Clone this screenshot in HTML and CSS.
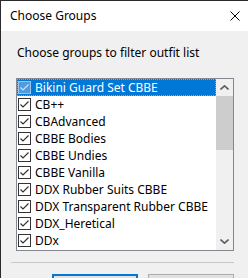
FILE: index.html
```html
<!DOCTYPE html>
<html lang="en">
<head>
    <meta charset="UTF-8">
    <meta name="viewport" content="width=device-width, initial-scale=1.0">
    <title>Choose Groups</title>
    <link rel="stylesheet" href="styles.css">
</head>
<body>
    <div class="window">
        <div class="titlebar">
            <span class="title">Choose Groups</span>
            <svg class="close" width="10" height="10" viewBox="0 0 10 10">
                <path d="M0.5 0.5 L9.5 9.5 M9.5 0.5 L0.5 9.5" stroke="#000" stroke-width="1" fill="none"/>
            </svg>
        </div>
        <div class="content">
            <div class="prompt">Choose groups to filter outfit list</div>
            <div class="listbox">
                <ul class="items">
                    <li class="item selected"><span class="box"><svg width="11" height="11" viewBox="0 0 11 11"><polyline points="1.5,5.5 4,8 9.5,2.5" /></svg></span>Bikini Guard Set CBBE</li>
                    <li class="item"><span class="box"><svg width="11" height="11" viewBox="0 0 11 11"><polyline points="1.5,5.5 4,8 9.5,2.5" /></svg></span>CB++</li>
                    <li class="item"><span class="box"><svg width="11" height="11" viewBox="0 0 11 11"><polyline points="1.5,5.5 4,8 9.5,2.5" /></svg></span>CBAdvanced</li>
                    <li class="item"><span class="box"><svg width="11" height="11" viewBox="0 0 11 11"><polyline points="1.5,5.5 4,8 9.5,2.5" /></svg></span>CBBE Bodies</li>
                    <li class="item"><span class="box"><svg width="11" height="11" viewBox="0 0 11 11"><polyline points="1.5,5.5 4,8 9.5,2.5" /></svg></span>CBBE Undies</li>
                    <li class="item"><span class="box"><svg width="11" height="11" viewBox="0 0 11 11"><polyline points="1.5,5.5 4,8 9.5,2.5" /></svg></span>CBBE Vanilla</li>
                    <li class="item"><span class="box"><svg width="11" height="11" viewBox="0 0 11 11"><polyline points="1.5,5.5 4,8 9.5,2.5" /></svg></span>DDX Rubber Suits CBBE</li>
                    <li class="item"><span class="box"><svg width="11" height="11" viewBox="0 0 11 11"><polyline points="1.5,5.5 4,8 9.5,2.5" /></svg></span>DDX Transparent Rubber CBBE</li>
                    <li class="item"><span class="box"><svg width="11" height="11" viewBox="0 0 11 11"><polyline points="1.5,5.5 4,8 9.5,2.5" /></svg></span>DDX_Heretical</li>
                    <li class="item"><span class="box"><svg width="11" height="11" viewBox="0 0 11 11"><polyline points="1.5,5.5 4,8 9.5,2.5" /></svg></span>DDx</li>
                </ul>
                <div class="scrollbar">
                    <div class="arrow">
                        <svg width="9" height="5" viewBox="0 0 9 5"><polyline points="0.5,4.5 4.5,0.8 8.5,4.5" /></svg>
                    </div>
                    <div class="track">
                        <div class="thumb"></div>
                    </div>
                    <div class="arrow">
                        <svg width="9" height="5" viewBox="0 0 9 5"><polyline points="0.5,0.5 4.5,4.2 8.5,0.5" /></svg>
                    </div>
                </div>
            </div>
            <div class="separator"></div>
            <div class="buttons">
                <button class="btn default" aria-label="OK"></button>
                <button class="btn" aria-label="Cancel"></button>
            </div>
        </div>
    </div>
</body>
</html>
```

FILE: styles.css
```css
body {
    margin: 0;
    font-family: "Noto Sans", sans-serif;
    font-size: 12px;
    color: #000;
    background: #f0f0f0;
    overflow: hidden;
}
.window {
    height: 277px;
    border-top: 1px solid #2b2b2b;
    border-left: 1px solid #2b2b2b;
    background: #f0f0f0;
    overflow: hidden;
}
.titlebar {
    height: 30px;
    background: #fff;
    display: flex;
    align-items: center;
    justify-content: space-between;
    padding: 0 8px 0 9px;
}
.title {
    line-height: 16px;
    margin-top: -1px;
}
.close {
    display: block;
    margin-top: -1px;
}
.content {
    padding: 0 14px 0 10px;
}
.prompt {
    line-height: 16px;
    padding: 14px 0 0 6px;
}
.listbox {
    margin: 17px 0 0 5px;
    width: 216px;
    height: 171px;
    border: 1px solid #828790;
    background: #fff;
    display: flex;
}
.items {
    list-style: none;
    margin: 0;
    padding: 0;
    flex: 1;
}
.item {
    height: 17px;
    line-height: 17px;
    display: flex;
    align-items: center;
    gap: 4px;
    padding-left: 1px;
    white-space: nowrap;
    box-sizing: border-box;
}
.box {
    width: 13px;
    height: 13px;
    box-sizing: border-box;
    border: 1px solid #333;
    background: #fff;
    display: flex;
}
.box polyline {
    fill: none;
    stroke: #333;
    stroke-width: 1.2;
}
.selected {
    background: #0078d7;
    color: #fff;
    outline: 1px dotted #ff8a28;
    outline-offset: -1px;
}
.selected .box {
    background: #4d9be0;
    border-color: #9cc4ea;
}
.selected .box polyline {
    stroke: #cfe3f6;
}
.scrollbar {
    width: 17px;
    background: #f0f0f0;
    display: flex;
    flex-direction: column;
}
.arrow {
    height: 17px;
    display: flex;
    align-items: center;
    justify-content: center;
}
.arrow polyline {
    fill: none;
    stroke: #606060;
    stroke-width: 1.6;
}
.track {
    flex: 1;
}
.thumb {
    height: 54px;
    background: #cdcdcd;
}
.separator {
    margin: 11px 0 0 0;
    height: 1px;
    background: #c8c8c8;
}
.buttons {
    display: flex;
    gap: 10px;
    margin: 11px 0 0 41px;
}
.btn {
    width: 86px;
    height: 23px;
    font-family: inherit;
    font-size: 12px;
    background: #e1e1e1;
    border: 1px solid #adadad;
    padding: 0;
}
.btn.default {
    border: 2px solid #0078d7;
}
```
